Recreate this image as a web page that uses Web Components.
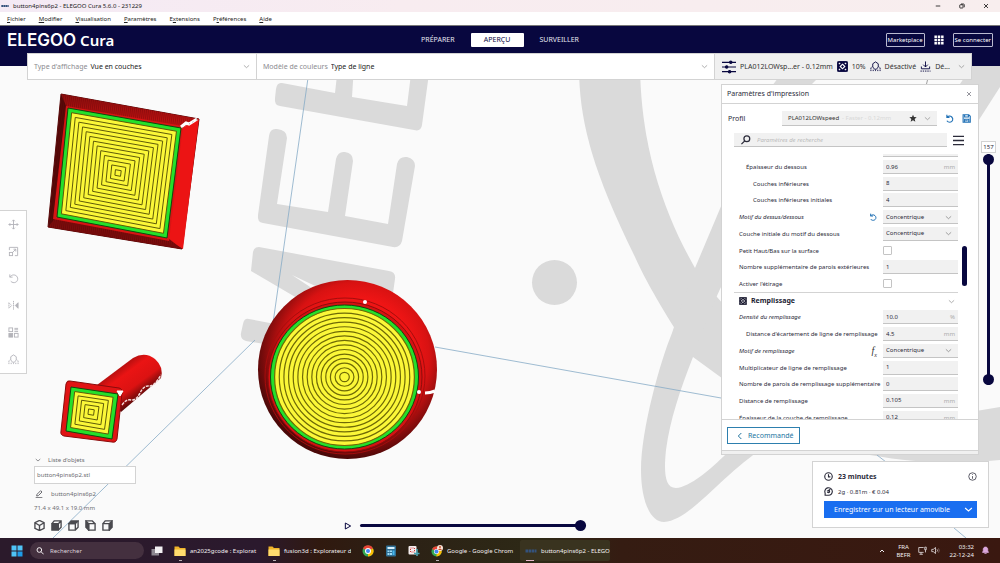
<!DOCTYPE html>
<html lang="fr">
<head>
<meta charset="utf-8">
<title>button4pins6p2 - ELEGOO Cura 5.6.0 - 231229</title>
<style>
  body {
    margin: 0;
    height: 100vh;
    overflow: hidden;
    font-family: "Noto Sans", "Open Sans", sans-serif;
    font-size: 6px;
    line-height: 8px;
    color: #2b2b3a;
    --navy: #08073f;
    --line: #d3d3d3;
    --field: #f1f1f1;
    --blue: #196ef0;
  }
</style>
</head>
<body>
<cura-app></cura-app>

<script>
const ICONS = {
  chevron: '<path d="M3 8l9 8 9-8"/>',
  up: '<path d="M4 16l8-8 8 8"/>',
  left: '<path d="M16 3l-9 9 9 9"/>',
  close: '<path d="M4 4l16 16M20 4L4 20"/>',
  minimize: '<path d="M3 12h18"/>',
  restore: '<rect x="3" y="7" width="13" height="13" rx="2"/><path d="M8 4h10q3 0 3 3v10"/>',
  apps: '<g fill="currentColor" stroke="none"><path d="M1 1h6v6H1zM9 1h6v6H9zM17 1h6v6h-6zM1 9h6v6H1zM9 9h6v6H9zM17 9h6v6h-6zM1 17h6v6H1zM9 17h6v6H9zM17 17h6v6h-6z"/></g>',
  sliders: '<path d="M0 4h24M0 12h24M0 20h24"/><g fill="currentColor"><circle cx="15" cy="4" r="2"/><circle cx="8" cy="12" r="2"/><circle cx="13" cy="20" r="2"/></g>',
  infill: '<rect x="1" y="1" width="22" height="22" rx="2" fill="currentColor"/><g fill="none" stroke="#fff" stroke-width="2.500"><path d="M12 7l5 5-5 5-5-5zM4 7l3-3M17 4l3 3M4 17l3 3M17 20l3-3"/></g>',
  support: '<path d="M12 2l6 4v7l-4 5h-4l-4-5V6z"/><path d="M2 22v-7l3-3M22 22v-7l-3-3M7 22v-3M12 22v-2M17 22v-3" stroke-dasharray="3 1"/>',
  adhesion: '<path d="M12 1v12M7 8l5 5 5-5M3 12v5h18v-5"/><path d="M1 22h22" stroke-dasharray="3 2"/>',
  reset: '<path d="M5 2v7h7M5 9c3-4 9-5 13-1 5 5 3 13-5 14-4 0-6-1-8-4"/>',
  save: '<path d="M3 2h15l4 4v16H3zM7 2v6h10V2M7 22v-8h11v8M9 18h6"/>',
  star: '<path fill="currentColor" d="M12 2l3 7 8 1-6 5 2 8-7-4-7 4 2-8-6-5 8-1z"/>',
  search: '<circle cx="14" cy="9" r="7"/><path d="M9 14l-8 8"/>',
  menu: '<path d="M0 3h24M0 12h24M0 21h24"/>',
  move: '<path d="M12 2v20M2 12h20M9 5l3-3 3 3M9 19l3 3 3-3M5 9l-3 3 3 3M19 9l3 3-3 3"/>',
  scale: '<path d="M3 9V3h18v18h-6"/><rect x="3" y="14" width="7" height="7"/><path d="M11 13l6-6M12 7h5v5"/>',
  rotate: '<path d="M4 3v6h6M4 9c4-6 11-6 15-2 4 5 2 11-2 13-4 2-8 1-11-2"/>',
  mirror: '<path d="M2 6v12l6-6zM12 2v20" stroke-dasharray="3 1"/><path d="M22 6v12l-6-6z" fill="currentColor"/>',
  mesh: '<rect x="2" y="2" width="8" height="8"/><rect x="14" y="14" width="8" height="8"/><rect x="2" y="14" width="8" height="8" fill="currentColor"/><path d="M14 3h8M14 6h8M14 10h8"/>',
  pencil: '<path d="M5 18l1-5L17 2l4 4-11 11zM2 23h20"/>',
  cube: '<path d="M12 1l10 5v12l-10 5-10-5V6zM2 6l10 6 10-6M12 12v11"/>',
  front: '<path d="M2 8h14v14H2z" fill="currentColor"/><path d="M2 8l5-6h15v14l-6 6M16 8l6-6"/>',
  top: '<path d="M2 8l5-6h15l-6 6z" fill="currentColor"/><path d="M2 8h14v14H2zM22 2v14l-6 6"/>',
  side: '<path d="M2 2l6 6v14l-6-6z" fill="currentColor"/><path d="M8 8h14v14H8zM2 2h14l6 6"/>',
  right: '<path d="M16 8l6-6v14l-6 6z" fill="currentColor"/><path d="M2 8h14v14H2zM2 8l5-6h15"/>',
  clock: '<circle cx="12" cy="12" r="10"/><path d="M12 6v7h5"/>',
  spool: '<path d="M3 22h9a10 10 0 1 0-9-6z"/><path d="M9 12a3 3 0 1 0 3-3l5-3M12 15v-3"/>',
  info: '<circle cx="12" cy="12" r="10"/><path d="M12 11v7M12 6v2"/>',
  play: '<path d="M4 3l16 9-16 9z"/>',
  windows: '<g stroke="none" fill="#4fc3f7"><path d="M1 1h10v10H1zM13 1h10v10H13zM1 13h10v10H1z"/><path d="M13 13h10v10H13z" fill="#1e9be8"/></g>',
  taskview: '<path d="M1 8h15v13H1z" fill="#8d8790" stroke="none"/><path d="M8 3h15v13H8z" fill="#f3f1f3" stroke="none"/>',
  folder: '<path d="M1 3h8l3 3h11v16H1z" fill="#f0b429" stroke="none"/><path d="M1 9h22v13H1z" fill="#ffdc6e" stroke="none"/>',
  chrome: '<g stroke="none"><circle cx="12" cy="12" r="11" fill="#34a853"/><path d="M12 12L2 7A11 11 0 0 1 22 7z" fill="#ea4335"/><path d="M12 12L22 7A11 11 0 0 1 12 23z" fill="#fbbc05"/><circle cx="12" cy="12" r="6" fill="#fff"/><circle cx="12" cy="12" r="4" fill="#4285f4"/></g>',
  profile: '<g stroke="none"><circle cx="11" cy="13" r="10" fill="#34a853"/><path d="M11 13L2 8A10 10 0 0 1 20 8z" fill="#ea4335"/><path d="M11 13L20 8A10 10 0 0 1 11 23z" fill="#fbbc05"/><circle cx="11" cy="13" r="5" fill="#fff"/><circle cx="11" cy="13" r="4" fill="#4285f4"/><circle cx="18" cy="6" r="6" fill="#fbe4d8"/><circle cx="18" cy="4" r="2" fill="#c2502e"/><path d="M14 10q4-6 8 0z" fill="#c2502e"/></g>',
  calc: '<g stroke="none"><rect x="2" y="1" width="20" height="22" rx="2" fill="#2f6f94"/><path d="M5 4h14v4H5z" fill="#d7f2ff"/><path d="M5 11h4v3H5zM10 11h4v3h-4zM5 16h4v4H5zM10 16h4v4h-4z" fill="#9fdcf7"/><path d="M15 11h4v9h-4z" fill="#46b8ee"/></g>',
  snip: '<rect x="1" y="2" width="16" height="17" rx="2" fill="#f5eeee" stroke="none"/><rect x="5" y="6" width="8" height="8" stroke="#c33" stroke-dasharray="2 2"/><path d="M18 8v14M12 17h11" stroke="#4aa6b5" stroke-width="3"/>',
  cura: '<path d="M1 12h22" stroke="#34527c" stroke-width="6" stroke-dasharray="5 1"/>',
  screen: '<path d="M15 4H2v13h13M8 17v5M4 22h9M18 3h4v7h-4zM20 10v7"/>',
  speaker: '<path d="M2 9h4l6-5v16l-6-5H2zM16 9q3 3 0 6"/><path d="M20 6q4 6 0 12" opacity=".4"/>',
  bell: '<path d="M4 17l2-4V8c1-7 11-7 12 0v5l2 4zM9 20h6" fill="currentColor"/>'
};

class UiIcon extends HTMLElement {
  constructor() {
    super();
    this.attachShadow({ mode: 'open' });
  }

  connectedCallback() {
    const stroke = this.getAttribute('stroke') || 2;
    this.shadowRoot.innerHTML = /*html*/ `
      <style>
        :host {
          display: inline-block;
          flex: none;
          width: var(--size, 8px);
          height: var(--size, 8px);
          vertical-align: top;
        }
        svg { display: block; width: 100%; height: 100%; }
      </style>
      <svg viewBox="0 0 24 24" fill="none" stroke="currentColor" stroke-width="${stroke}" aria-hidden="true">${ICONS[this.getAttribute('name')]}</svg>
    `;
  }
}
customElements.define('ui-icon', UiIcon);

class TitleBar extends HTMLElement {
  constructor() {
    super();
    this.attachShadow({ mode: 'open' });
    this.shadowRoot.innerHTML = /*html*/ `
      <style>
        :host {
          display: flex;
          align-items: center;
          height: 12px;
          background: linear-gradient(90deg, #f4eaf5, #f8ecf0 40%, #f8eeee);
          color: #222;
        }
        .mark { --size: 8px; margin: 0 4px 0 1px; }
        .title { flex: 1; }
        .window { display: flex; padding-right: 2px; --size: 6px; }
        button {
          width: 24px;
          padding: 0;
          border: 0;
          background: none;
          line-height: 6px;
        }
      </style>
      <ui-icon class="mark" name="cura"></ui-icon>
      <span class="title"><slot></slot></span>
      <div class="window">
        <button aria-label="Réduire"><ui-icon name="minimize" stroke="3"></ui-icon></button>
        <button aria-label="Restaurer"><ui-icon name="restore" stroke="3"></ui-icon></button>
        <button aria-label="Fermer"><ui-icon name="close" stroke="3"></ui-icon></button>
      </div>
    `;
  }
}
customElements.define('title-bar', TitleBar);

class MenuBar extends HTMLElement {
  constructor() {
    super();
    this.attachShadow({ mode: 'open' });
    this.shadowRoot.innerHTML = /*html*/ `
      <style>
        :host { display: block; height: 13px; background: #fff; border-bottom: 1px solid #777; }
        nav { display: flex; gap: 13px; padding: 3px 7px; }
        a { color: #222; text-decoration: none; }
      </style>
      <nav>
        <a href="#"><u>F</u>ichier</a>
        <a href="#"><u>M</u>odifier</a>
        <a href="#"><u>V</u>isualisation</a>
        <a href="#"><u>P</u>aramètres</a>
        <a href="#">E<u>x</u>tensions</a>
        <a href="#">P<u>r</u>éférences</a>
        <a href="#"><u>A</u>ide</a>
      </nav>
    `;
  }
}
customElements.define('menu-bar', MenuBar);

class MainHeader extends HTMLElement {
  constructor() {
    super();
    this.attachShadow({ mode: 'open' });
    this.shadowRoot.innerHTML = /*html*/ `
      <style>
        :host { display: block; height: 40px; background: var(--navy); color: #fff; }
        header {
          display: grid;
          grid-template-columns: 1fr auto 1fr;
          align-items: center;
          height: 27px;
          padding: 0 7px;
        }
        h1 {
          display: flex;
          align-items: baseline;
          gap: 4px;
          margin: 0;
          font-size: 15px;
          line-height: 18px;
          font-weight: 600;
        }
        .brand { font-family: Inter, sans-serif; font-size: 17px; }
        nav { display: flex; align-items: center; gap: 16px; font-size: 7px; }
        button {
          height: 14px;
          padding: 0;
          border: 0;
          border-radius: 1px;
          background: none;
          color: #e6e6f0;
          font: inherit;
        }
        .active { width: 53px; background: #fff; color: var(--navy); }
        .actions { display: flex; align-items: center; justify-content: flex-end; gap: 8px; }
        .actions button { padding: 0 1px; border: 1px solid #b9b9d0; color: #fff; }
        .actions .apps { height: 10px; border: 0; --size: 10px; line-height: 10px; }
      </style>
      <header>
        <h1><span class="brand">ELEGOO</span> Cura</h1>
        <nav>
          <button>PRÉPARER</button>
          <button class="active">APERÇU</button>
          <button>SURVEILLER</button>
        </nav>
        <div class="actions">
          <button>Marketplace</button>
          <button class="apps" aria-label="Applications"><ui-icon name="apps"></ui-icon></button>
          <button>Se connecter</button>
        </div>
      </header>
    `;
  }
}
customElements.define('main-header', MainHeader);

class StageBar extends HTMLElement {
  constructor() {
    super();
    this.attachShadow({ mode: 'open' });
    this.shadowRoot.innerHTML = /*html*/ `
      <style>
        :host {
          display: grid;
          grid-template-columns: 229px 1fr 256px;
          box-sizing: border-box;
          height: 27px;
          background: #fff;
          border: 1px solid var(--line);
          font-size: 7px;
          position: relative;
        }
        .choice {
          display: grid;
          grid-template-columns: auto 1fr auto;
          align-items: center;
          gap: 3px;
          padding: 0 6px;
          border-right: 1px solid var(--line);
          --size: 7px;
        }
        label { color: #8b8b90; }
        select {
          grid-area: 1 / 2 / 2 / 4;
          height: 20px;
          padding: 0;
          border: 0;
          appearance: none;
          background: none;
          color: #222;
          font: inherit;
        }
        .choice ui-icon { grid-area: 1 / 3; color: #777; pointer-events: none; }
        .summary {
          display: flex;
          align-items: center;
          gap: 4px;
          padding: 0 6px 0 7px;
          border: 0;
          background: #f0f0f0;
          color: #333;
          font: inherit;
          text-align: left;
          white-space: nowrap;
        }
        .summary ui-icon { --size: 11px; color: var(--navy); }
        .summary .wide { --size: 14px; }
        .summary .arrow { --size: 7px; color: #777; margin-left: auto; }
      </style>
      <div class="choice">
        <label for="view">Type d'affichage</label>
        <select id="view"><option>Vue en couches</option></select>
        <ui-icon name="chevron"></ui-icon>
      </div>
      <div class="choice">
        <label for="colors">Modèle de couleurs</label>
        <select id="colors"><option>Type de ligne</option></select>
        <ui-icon name="chevron"></ui-icon>
      </div>
      <button class="summary">
        <ui-icon class="wide" name="sliders"></ui-icon>PLA012LOWsp...er - 0.12mm
        <ui-icon name="infill"></ui-icon>10%
        <ui-icon name="support"></ui-icon>Désactivé
        <ui-icon name="adhesion"></ui-icon>Dé...
        <ui-icon class="arrow" name="chevron"></ui-icon>
      </button>
    `;
  }
}
customElements.define('stage-bar', StageBar);

function scaled(corners, cx, cy, k) {
  return corners.map(([x, y]) => `${cx + (x - cx) * k},${cy + (y - cy) * k}`).join(' ');
}

// The build plate with the sliced models
class ModelScene extends HTMLElement {
  constructor() {
    super();
    this.attachShadow({ mode: 'open' });
    this.shadowRoot.innerHTML = /*html*/ `
      <style>
        :host { display: block; background: #fafafa; }
        svg { display: block; width: 100%; height: 100%; }
      </style>
      <svg viewBox="0 66 1000 472" preserveAspectRatio="xMidYMid slice" aria-hidden="true">
        <defs>
          <radialGradient id="dome" cx=".55" cy=".42" r=".58">
            <stop offset=".55" stop-color="#ef1515"/>
            <stop offset=".7" stop-color="#d81212"/>
            <stop offset=".85" stop-color="#8f0d0d"/>
            <stop offset="1" stop-color="#4a0808"/>
          </radialGradient>
          <linearGradient id="rod" gradientUnits="userSpaceOnUse" x1="118" y1="368" x2="140" y2="398">
            <stop offset="0" stop-color="#b30f0f"/>
            <stop offset=".25" stop-color="#ea1414"/>
            <stop offset=".65" stop-color="#dc1212"/>
            <stop offset="1" stop-color="#5a0909"/>
          </linearGradient>
          <linearGradient id="edge" x1="0" y1="0" x2="0" y2="1">
            <stop offset="0" stop-color="#8e0d0d"/>
            <stop offset="1" stop-color="#c91212"/>
          </linearGradient>
          <pattern id="layers" width="2" height="3" patternUnits="userSpaceOnUse" patternTransform="rotate(8)">
            <path d="M0 0h1v3H0z" fill="#300" opacity=".22"/>
          </pattern>
        </defs>
        <g fill="#dadada">
          <path d="M282 83L335 93 338 66H354L352 97 407 106 412 66H430L422 125Q421 132 414 130L280 106Q274 105 275 98L276 89Q277 82 282 83Z"/>
          <path d="M269 136Q270 128 277 129 287 130 287 138L277 204 328 212 336 159Q338 151 345 152 353 153 353 161L345 216 388 224 397 164Q399 156 407 157 415 159 415 166L402 241Q400 248 393 247L263 223Q257 222 258 215Z"/>
          <path d="M259 247L389 271Q396 272 395 279L392 300 345 300 292 275 345 310 320 330 297 298 251 271 253 252Q254 247 259 247Z"/>
          <path d="M249 319L275 324 270 345 246 341Q240 339 241 333L243 324Q244 318 249 319Z"/>
          <circle cx="554.500" cy="282.500" r="22.500"/>
          <path d="M579 66C579 125 595 175 635 257 650 290 668 318 693 357L730 384V312L717 297C710 289 705 284 695 268 665 215 641 150 640 66Z"/>
          <path d="M722 204L695 268C688 285 680 310 672 333 660 362 641 430 641 470 641 500 650 522 664 522 690 520 715 482 760 450L727 453C710 470 690 487 676 488 664 488 664 470 666 450 670 420 680 390 693 357 705 325 710 310 722 285Z"/>
          <path d="M970 412L1000 407V460C960 464 920 464 870 455V440H970Z"/>
          <path d="M972 66H1000V87L975 126H960V84Z"/>
          <path d="M778 78H818L810 86H772Z"/>
        </g>
        <g stroke="#86abc6" stroke-width=".8" fill="none">
          <path d="M308 78L272 330M53 538L255 340M435 347L721 398M877 455L886 462M954 528L966 538"/>
          <path d="M928 78L926 86" stroke="#888"/>
        </g>
        <!-- square button -->
        <g stroke-linejoin="round">
          <path d="M61 94L199 119 182 249 48 227Z" fill="#5a0909" stroke="#5a0909" stroke-width="1"/>
          <path d="M61 94L199 119 181 129 67 108Z" fill="url(#edge)"/>
          <path d="M199 119L183 249 166 239 181 126Z" fill="#ec1414"/>
          <path d="M48 227L182 249 168 238 56 217Z" fill="#7d0c0c"/>
          <path d="M61 94L199 119 181 127 168 239 182 249 48 227Z" fill="url(#layers)"/>
          <path d="M66 106L183 126 169 241 53 219Z" fill="#d81414"/>
        </g>
        <g id="square"></g>
        <path d="M181 127L186 123 189 124 197 119" stroke="#fff" stroke-width="3" fill="none"/>
        <path d="M182 128L198 119" stroke="#999" stroke-width="1" stroke-dasharray="1 3" fill="none"/>
        <!-- pin -->
        <path d="M97 385L133 358Q145 351 155 359 164 367 161 378L121 412Z" fill="url(#rod)"/>
        <path d="M122 405Q126 399 131 400T140 393 149 386 161 375" stroke="#f4dcdc" stroke-width="1.500" stroke-dasharray="3 1" fill="none"/>
        <path d="M70 381L119 388Q123 389 122 393L117 439Q116 443 112 442L64 436Q60 435 61 431L66 384Q67 380 70 381Z" fill="#e01414" stroke="#8a0c0c" stroke-width="1"/>
        <g id="pin"></g>
        <path d="M117 391L123 391 120 396Z" fill="#fff" stroke="#fff"/>
        <!-- round button -->
        <circle cx="347.500" cy="369.500" r="89.500" fill="url(#dome)"/>
        <ellipse cx="345" cy="376" rx="80" ry="78" fill="none" stroke="#a50d0d"/>
        <ellipse cx="345" cy="377" rx="77" ry="75" fill="#d51212" stroke="#8d0c0c"/>
        <g id="disc"></g>
        <circle cx="365" cy="302" r="2" fill="#fff"/>
        <circle cx="419" cy="392" r="2" fill="#fff"/>
        <path d="M425 393Q430 393 435 391" stroke="#fff" stroke-width="3" fill="none"/>
      </svg>
    `;
    const rings = (corners, cx, cy, from, count) => {
      let out = '';
      for (let i = count; i > 0; i--) {
        const k = (from * (i - 0.3)) / count;
        out += `<polygon points="${scaled(corners, cx, cy, k)}" fill="#fbf738" stroke="#5f5a08" stroke-width="1"/>`;
      }
      return out;
    };
    const square = [[68, 108], [181, 128], [167, 238], [57, 217]];
    this.shadowRoot.getElementById('square').innerHTML =
      `<polygon points="${square.join(' ')}" fill="#25e02a" stroke="#0d4a0d"/>` +
      rings(square, 118, 173, 0.95, 13);
    const pin = [[71, 387], [118, 394], [112, 439], [66, 431]];
    this.shadowRoot.getElementById('pin').innerHTML =
      `<polygon points="${pin.join(' ')}" fill="#25e02a" stroke="#0d4a0d"/>` +
      rings(pin, 91, 412, 0.87, 5);
    let disc = '<ellipse cx="344.5" cy="377" rx="74" ry="72" fill="#25e02a" stroke="#0d4a0d"/>';
    for (let i = 15; i > 0; i--) {
      const r = 4.65 * (i - 0.4) + 2;
      disc += `<ellipse cx="344.5" cy="377" rx="${r}" ry="${r * 0.98}" fill="#fbf738" stroke="#6e6906" stroke-width="1.2"/>`;
    }
    this.shadowRoot.getElementById('disc').innerHTML = disc;
  }
}
customElements.define('model-scene', ModelScene);

class ToolRail extends HTMLElement {
  constructor() {
    super();
    this.attachShadow({ mode: 'open' });
    const tools = [['move', 'Déplacer'], ['scale', 'Mettre à l\'échelle'], ['rotate', 'Tourner'], ['mirror', 'Miroir'], ['mesh', 'Paramètres par modèle'], ['support', 'Bloqueur de support']];
    this.shadowRoot.innerHTML = /*html*/ `
      <style>
        :host {
          display: flex;
          flex-direction: column;
          width: 26px;
          background: #fff;
          border: 1px solid var(--line);
          border-left: 0;
        }
        button {
          height: 27px;
          padding: 0;
          border: 0;
          background: none;
          color: #b4b4ba;
          line-height: 11px;
          --size: 11px;
        }
      </style>
      ${tools.map(([icon, label]) => `<button aria-label="${label}"><ui-icon name="${icon}"></ui-icon></button>`).join('')}
    `;
  }
}
customElements.define('tool-rail', ToolRail);

class ObjectList extends HTMLElement {
  constructor() {
    super();
    this.attachShadow({ mode: 'open' });
    this.shadowRoot.innerHTML = /*html*/ `
      <style>
        :host { display: block; width: 102px; color: #6d6d72; }
        button { padding: 0; border: 0; background: none; color: inherit; font: inherit; }
        .toggle { display: flex; align-items: center; gap: 7px; padding: 0 1px; --size: 6px; }
        ul {
          list-style: none;
          margin: 2px 0 6px;
          padding: 4px 2px;
          background: #fff;
          border: 1px solid var(--line);
        }
        .name { display: flex; align-items: center; gap: 8px; padding: 0 1px; --size: 8px; }
        p { margin: 6px 0 8px; }
        .views { display: flex; gap: 6px; color: #4a4a4f; --size: 11px; }
        .views button { line-height: 11px; }
      </style>
      <button class="toggle"><ui-icon name="chevron" stroke="3"></ui-icon>Liste d'objets</button>
      <ul><li>button4pins6p2.stl</li></ul>
      <button class="name"><ui-icon name="pencil" stroke="3"></ui-icon>button4pins6p2</button>
      <p>71.4 x 49.1 x 19.0 mm</p>
      <div class="views">
        <button aria-label="Vue 3D"><ui-icon name="cube" stroke="3"></ui-icon></button>
        <button aria-label="Vue de face"><ui-icon name="front" stroke="3"></ui-icon></button>
        <button aria-label="Vue de dessus"><ui-icon name="top" stroke="3"></ui-icon></button>
        <button aria-label="Vue gauche"><ui-icon name="side" stroke="3"></ui-icon></button>
        <button aria-label="Vue droite"><ui-icon name="right" stroke="3"></ui-icon></button>
      </div>
    `;
  }
}
customElements.define('object-list', ObjectList);

class PathSlider extends HTMLElement {
  constructor() {
    super();
    this.attachShadow({ mode: 'open' });
    this.shadowRoot.innerHTML = /*html*/ `
      <style>
        :host { display: flex; align-items: center; gap: 8px; width: 242px; color: var(--navy); }
        button { padding: 0; border: 0; background: none; color: inherit; line-height: 8px; }
        input { flex: 1; min-width: 0; height: 11px; margin: 0; appearance: none; background: none; }
        input::-webkit-slider-runnable-track { height: 3px; border-radius: 2px; background: var(--navy); }
        input::-webkit-slider-thumb {
          appearance: none;
          width: 11px;
          height: 11px;
          margin-top: -4px;
          border-radius: 50%;
          background: var(--navy);
        }
      </style>
      <button aria-label="Lecture"><ui-icon name="play" stroke="3"></ui-icon></button>
      <input type="range" min="0" max="100" value="100" aria-label="Trajet">
    `;
  }
}
customElements.define('path-slider', PathSlider);

class LayerSlider extends HTMLElement {
  constructor() {
    super();
    this.attachShadow({ mode: 'open' });
    this.shadowRoot.innerHTML = /*html*/ `
      <style>
        :host { display: flex; flex-direction: column; align-items: center; gap: 1px; }
        output {
          box-sizing: border-box;
          min-width: 15px;
          padding: 1px;
          background: #fff;
          border: 1px solid var(--line);
          text-align: center;
        }
        .range { display: grid; height: 231px; }
        input {
          grid-area: 1 / 1;
          width: 11px;
          height: 231px;
          margin: 0;
          appearance: none;
          background: none;
          writing-mode: vertical-lr;
          direction: rtl;
          pointer-events: none;
        }
        input::-webkit-slider-runnable-track { width: 3px; background: var(--navy); border-radius: 2px; }
        input::-webkit-slider-thumb {
          appearance: none;
          width: 11px;
          height: 11px;
          margin-left: -4px;
          border-radius: 50%;
          background: var(--navy);
          pointer-events: auto;
        }
      </style>
      <output>157</output>
      <div class="range">
        <input type="range" min="1" max="157" value="1" aria-label="Couche inférieure">
        <input type="range" min="1" max="157" value="157" aria-label="Couche supérieure">
      </div>
    `;
  }
}
customElements.define('layer-slider', LayerSlider);

class SettingRow extends HTMLElement {
  constructor() {
    super();
    this.attachShadow({ mode: 'open' });
  }

  connectedCallback() {
    const value = this.getAttribute('value') || '';
    const unit = this.getAttribute('unit') || '';
    const mark = this.getAttribute('mark');
    let field = `<input id="field" type="text" value="${value}"><span class="unit">${unit}</span>`;
    if (this.getAttribute('type') === 'select') {
      field = `<select id="field"><option>${value}</option></select><ui-icon name="chevron"></ui-icon>`;
    } else if (this.getAttribute('type') === 'check') {
      field = '<input id="field" type="checkbox">';
    }
    let extra = '';
    if (mark === 'reset') extra = '<button aria-label="Réinitialiser"><ui-icon name="reset" stroke="3"></ui-icon></button>';
    if (mark === 'fx') extra = '<button class="fx">f<sub>x</sub></button>';
    this.shadowRoot.innerHTML = /*html*/ `
      <style>
        :host {
          display: grid;
          grid-template-columns: 1fr auto 75px;
          align-items: center;
          min-height: 0;
          padding-left: calc(5px + 7px * var(--level, 0));
          white-space: nowrap;
        }
        :host([level="1"]) { --level: 1; }
        :host([level="2"]) { --level: 2; }
        :host([changed]) label { font-style: italic; }
        label { min-width: 0; }
        button { padding: 0 6px; border: 0; background: none; color: #1f70b5; line-height: 8px; }
        .fx { color: #333; font: italic 10px/10px "Liberation Serif", serif; }
        sub { font-size: 6px; line-height: 1px; }
        .field { grid-column: 3; display: grid; grid-template-columns: 1fr auto; align-items: center; }
        input, select {
          grid-area: 1 / 1 / 2 / 3;
          box-sizing: border-box;
          min-width: 0;
          width: 100%;
          height: 14px;
          margin: 0;
          padding: 0 3px;
          border: 0;
          border-bottom: 1px solid #c4c4c4;
          border-radius: 0;
          background: var(--field);
          color: inherit;
          font: inherit;
          appearance: none;
        }
        input[type="checkbox"] {
          width: 9px;
          height: 9px;
          border: 1px solid #c4c4c4;
          border-radius: 1px;
          background: #fff;
        }
        .unit { grid-area: 1 / 2; padding-right: 3px; color: #aaa; }
        .field ui-icon { grid-area: 1 / 2; --size: 7px; margin-right: 6px; color: #666; pointer-events: none; }
      </style>
      <label for="field">${this.getAttribute('label')}</label>
      ${extra}
      <div class="field">${field}</div>
    `;
  }
}
customElements.define('setting-row', SettingRow);

class SettingGroup extends HTMLElement {
  constructor() {
    super();
    this.attachShadow({ mode: 'open' });
    this.shadowRoot.innerHTML = /*html*/ `
      <style>
        :host { display: flex; align-items: center; border-top: 1px solid var(--line); min-height: 0; }
        button {
          flex: 1;
          display: flex;
          align-items: center;
          gap: 4px;
          padding: 0 3px 0 5px;
          border: 0;
          background: none;
          color: #1d1d33;
          font: inherit;
          font-size: 7px;
          font-weight: 700;
        }
        .arrow { --size: 7px; margin-left: auto; color: #777; }
      </style>
      <button><ui-icon name="infill"></ui-icon><slot></slot><ui-icon class="arrow" name="chevron"></ui-icon></button>
    `;
  }
}
customElements.define('setting-group', SettingGroup);

class PrintSettings extends HTMLElement {
  constructor() {
    super();
    this.attachShadow({ mode: 'open' });
    this.shadowRoot.innerHTML = /*html*/ `
      <style>
        :host {
          display: flex;
          flex-direction: column;
          box-sizing: border-box;
          background: #fff;
          border: 1px solid var(--line);
        }
        button { padding: 0; border: 0; background: none; color: inherit; font: inherit; }
        header {
          display: flex;
          align-items: center;
          justify-content: space-between;
          height: 18px;
          padding: 0 6px 0 5px;
          border-bottom: 1px solid var(--line);
          font-size: 7px;
        }
        header button { line-height: 6px; --size: 6px; }
        .profile {
          display: grid;
          grid-template-columns: 1fr 155px 9px 9px;
          column-gap: 8px;
          align-items: center;
          padding: 7px 7px 7px 6px;
          color: #1f70b5;
          --size: 9px;
        }
        .profile label { color: #2b2b3a; font-size: 7px; }
        .pick {
          display: flex;
          align-items: center;
          gap: 3px;
          box-sizing: border-box;
          height: 15px;
          padding: 0 6px;
          background: var(--field);
          border-bottom: 1px solid #c4c4c4;
          color: #333;
        }
        .pick span { color: #d8d8d8; }
        .pick .star { margin-left: auto; --size: 8px; }
        .pick .arrow { --size: 7px; margin-left: 4px; color: #777; }
        .find { display: flex; align-items: center; gap: 6px; padding: 0 14px 0 12px; }
        .box {
          flex: 1;
          display: flex;
          align-items: center;
          gap: 6px;
          height: 13px;
          padding: 0 7px;
          background: var(--field);
          border-bottom: 1px solid #c4c4c4;
          --size: 10px;
        }
        .box input { flex: 1; min-width: 0; padding: 0; border: 0; background: none; font: inherit; }
        .box input::placeholder { color: #bbb; font-style: italic; }
        .find button { --size: 11px; line-height: 11px; }
        .body {
          flex: 1;
          display: flex;
          align-items: flex-start;
          gap: 4px;
          min-height: 0;
          margin-top: 7px;
          padding-left: 12px;
          overflow: hidden;
          border-bottom: 1px solid var(--line);
        }
        .list {
          display: grid;
          grid-auto-rows: 1fr;
          width: 224px;
          height: 284px;
          margin-top: -12px;
        }
        .thumb { width: 5px; height: 40px; margin-top: 92px; border-radius: 3px; background: var(--navy); }
        footer { padding: 7px 5px 6px; border-bottom: 1px solid var(--line); }
        footer button {
          display: flex;
          align-items: center;
          gap: 4px;
          height: 17px;
          padding: 0 5px 0 8px;
          border: 1px solid #2d7fae;
          color: #24759f;
          font-size: 7px;
        }
        .grip { height: 3px; background: #f0f0f0; }
      </style>
      <header><span>Paramètres d'impression</span><button aria-label="Fermer"><ui-icon name="close"></ui-icon></button></header>
      <div class="profile">
        <label for="profile">Profil</label>
        <button class="pick" id="profile">PLA012LOWspeed <span>- Faster - 0.12mm</span>
          <ui-icon class="star" name="star" stroke="0"></ui-icon><ui-icon class="arrow" name="chevron"></ui-icon>
        </button>
        <button aria-label="Annuler"><ui-icon name="reset" stroke="3"></ui-icon></button>
        <button aria-label="Enregistrer"><ui-icon name="save" stroke="3"></ui-icon></button>
      </div>
      <div class="find">
        <div class="box">
          <ui-icon name="search" stroke="3"></ui-icon>
          <input type="search" placeholder="Paramètres de recherche" aria-label="Paramètres de recherche">
        </div>
        <button aria-label="Visibilité des paramètres"><ui-icon name="menu" stroke="3"></ui-icon></button>
      </div>
      <div class="body">
        <div class="list"><slot></slot></div>
        <div class="thumb"></div>
      </div>
      <footer><button><ui-icon name="left" stroke="3"></ui-icon>Recommandé</button></footer>
      <div class="grip"></div>
    `;
  }
}
customElements.define('print-settings', PrintSettings);

class JobCard extends HTMLElement {
  constructor() {
    super();
    this.attachShadow({ mode: 'open' });
    this.shadowRoot.innerHTML = /*html*/ `
      <style>
        :host {
          display: block;
          box-sizing: border-box;
          width: 177px;
          padding: 7px 11px 9px;
          background: #fff;
          border: 1px solid var(--line);
        }
        .line { display: flex; align-items: center; gap: 5px; height: 15px; --size: 9px; }
        strong { flex: 1; font-size: 7px; }
        button { padding: 0; border: 0; background: none; color: inherit; font: inherit; line-height: 9px; }
        .save { display: grid; grid-template-columns: 1fr 17px; margin-top: 2px; height: 17px; background: var(--blue); color: #fff; font-size: 7px; --size: 9px; }
      </style>
      <div class="line"><ui-icon name="clock" stroke="3"></ui-icon><strong>23 minutes</strong><button aria-label="Détails"><ui-icon name="info"></ui-icon></button></div>
      <div class="line"><ui-icon name="spool" stroke="3"></ui-icon><span>2g · 0.81m · € 0.04</span></div>
      <div class="save">
        <button>Enregistrer sur un lecteur amovible</button>
        <button aria-label="Autres sorties"><ui-icon name="chevron" stroke="3"></ui-icon></button>
      </div>
    `;
  }
}
customElements.define('job-card', JobCard);

class TaskBar extends HTMLElement {
  constructor() {
    super();
    this.attachShadow({ mode: 'open' });
    this.shadowRoot.innerHTML = /*html*/ `
      <style>
        :host {
          display: flex;
          align-items: center;
          height: 25px;
          background: linear-gradient(90deg, #2b1a2b, #2b192d 26%, #30190f 32%, #2c2115 40%, #2d2916 54%, #351c12 62%, #3a1810);
          color: #f2eef0;
          --size: 12px;
        }
        button { padding: 0; border: 0; background: none; color: inherit; font: inherit; line-height: 12px; }
        .start { margin: 0 7px 0 11px; }
        .search {
          display: flex;
          align-items: center;
          gap: 6px;
          width: 108px;
          height: 17px;
          margin-right: 7px;
          padding-left: 6px;
          border-radius: 9px;
          background: #44303f;
          --size: 8px;
        }
        .search ui-icon { transform: scaleX(-1); }
        .search input { width: 80px; padding: 0; border: 0; background: none; font: inherit; }
        .search input::placeholder { color: #ddd4da; }
        .apps { display: flex; align-items: center; gap: 11px; }
        .task {
          position: relative;
          display: flex;
          align-items: center;
          gap: 4px;
          width: 83px;
          height: 21px;
          white-space: nowrap;
          overflow: hidden;
        }
        .task::after {
          content: "";
          position: absolute;
          left: 5px;
          bottom: 0;
          width: 3px;
          height: 1px;
          background: #b9b0b4;
        }
        .current { width: 90px; padding-left: 5px; margin-left: -5px; background: #39331f; border-radius: 2px; }
        .current::after { left: 6px; width: 8px; background: #e8b8cc; }
        .tray { display: flex; align-items: center; gap: 7px; margin-left: auto; padding-right: 10px; text-align: center; --size: 9px; }
        .tray .small { --size: 6px; }
        .tray .lang { margin-left: 4px; }
        .tray .sound { margin: 0 3px 0 -3px; }
        .tray .time { text-align: right; }
        .tray .bell { color: #dba8dd; }
      </style>
      <button class="start" aria-label="Démarrer"><ui-icon name="windows"></ui-icon></button>
      <div class="search"><ui-icon name="search" stroke="3"></ui-icon><input type="search" placeholder="Rechercher" aria-label="Rechercher"></div>
      <div class="apps">
        <button aria-label="Vue des tâches"><ui-icon name="taskview"></ui-icon></button>
        <button class="task"><ui-icon name="folder"></ui-icon>an2025gcode : Explorat</button>
        <button class="task"><ui-icon name="folder"></ui-icon>fusion3d : Explorateur d</button>
        <button aria-label="Chrome"><ui-icon name="chrome"></ui-icon></button>
        <button aria-label="Calculatrice"><ui-icon name="calc"></ui-icon></button>
        <button aria-label="Capture"><ui-icon name="snip"></ui-icon></button>
        <button class="task"><ui-icon name="profile"></ui-icon>Google - Google Chrom</button>
        <button class="task current"><ui-icon name="cura"></ui-icon>button4pins6p2 - ELEGO</button>
      </div>
      <div class="tray">
        <ui-icon class="small" name="up" stroke="4"></ui-icon>
        <span class="lang">FRA<br>BEFR</span>
        <ui-icon name="screen"></ui-icon>
        <ui-icon class="sound" name="speaker"></ui-icon>
        <span class="time">03:32<br>22-12-24</span>
        <ui-icon class="bell" name="bell"></ui-icon>
      </div>
    `;
  }
}
customElements.define('task-bar', TaskBar);

class CuraApp extends HTMLElement {
  constructor() {
    super();
    this.attachShadow({ mode: 'open' });
    this.shadowRoot.innerHTML = /*html*/ `
      <style>
        :host { display: flex; flex-direction: column; height: 100vh; }
        main { flex: 1; position: relative; display: flex; flex-direction: column; min-height: 0; }
        main-header { position: relative; }
        stage-bar { margin: -13px 28px 0 27px; }
        /* the 3D view lies under all the floating panels */
        model-scene { position: absolute; inset: 40px 0 0; }
        .desk {
          flex: 1;
          position: relative;
          display: grid;
          grid-template-columns: 1fr 258px 19px;
          grid-template-rows: 1fr auto;
          min-height: 0;
          padding-right: 2px;
        }
        .left {
          grid-row: 1 / 3;
          display: flex;
          flex-direction: column;
          justify-content: space-between;
        }
        tool-rail { margin-top: 130px; }
        .bottom {
          display: flex;
          align-items: flex-end;
          justify-content: space-between;
          padding: 0 135px 7px 34px;
        }
        print-settings { margin-top: 4px; min-height: 0; }
        layer-slider { margin-top: 61px; }
        job-card { grid-column: 2 / 4; justify-self: end; margin: 6px 9px 10px 0; }
      </style>
      <title-bar>button4pins6p2 - ELEGOO Cura 5.6.0 - 231229</title-bar>
      <menu-bar></menu-bar>
      <main>
        <model-scene></model-scene>
        <main-header></main-header>
        <stage-bar></stage-bar>
        <div class="desk">
          <div class="left">
            <tool-rail></tool-rail>
            <div class="bottom">
              <object-list></object-list>
              <path-slider></path-slider>
            </div>
          </div>
          <print-settings>
            <setting-row label=""></setting-row>
            <setting-row level="1" label="Épaisseur du dessous" value="0.96" unit="mm"></setting-row>
            <setting-row level="2" label="Couches inférieures" value="8"></setting-row>
            <setting-row level="2" label="Couches inférieures initiales" value="4"></setting-row>
            <setting-row changed label="Motif du dessus/dessous" type="select" value="Concentrique" mark="reset"></setting-row>
            <setting-row label="Couche initiale du motif du dessous" type="select" value="Concentrique"></setting-row>
            <setting-row label="Petit Haut/Bas sur la surface" type="check"></setting-row>
            <setting-row label="Nombre supplémentaire de parois extérieures" value="1"></setting-row>
            <setting-row label="Activer l'étirage" type="check"></setting-row>
            <setting-group>Remplissage</setting-group>
            <setting-row changed label="Densité du remplissage" value="10.0" unit="%"></setting-row>
            <setting-row level="1" label="Distance d'écartement de ligne de remplissage" value="4.5" unit="mm"></setting-row>
            <setting-row changed label="Motif de remplissage" type="select" value="Concentrique" mark="fx"></setting-row>
            <setting-row label="Multiplicateur de ligne de remplissage" value="1"></setting-row>
            <setting-row label="Nombre de parois de remplissage supplémentaire" value="0"></setting-row>
            <setting-row label="Distance de remplissage" value="0.105" unit="mm"></setting-row>
            <setting-row label="Épaisseur de la couche de remplissage" value="0.12" unit="mm"></setting-row>
          </print-settings>
          <layer-slider></layer-slider>
          <job-card></job-card>
        </div>
      </main>
      <task-bar></task-bar>
    `;
  }
}
customElements.define('cura-app', CuraApp);
</script>
</body>
</html>
